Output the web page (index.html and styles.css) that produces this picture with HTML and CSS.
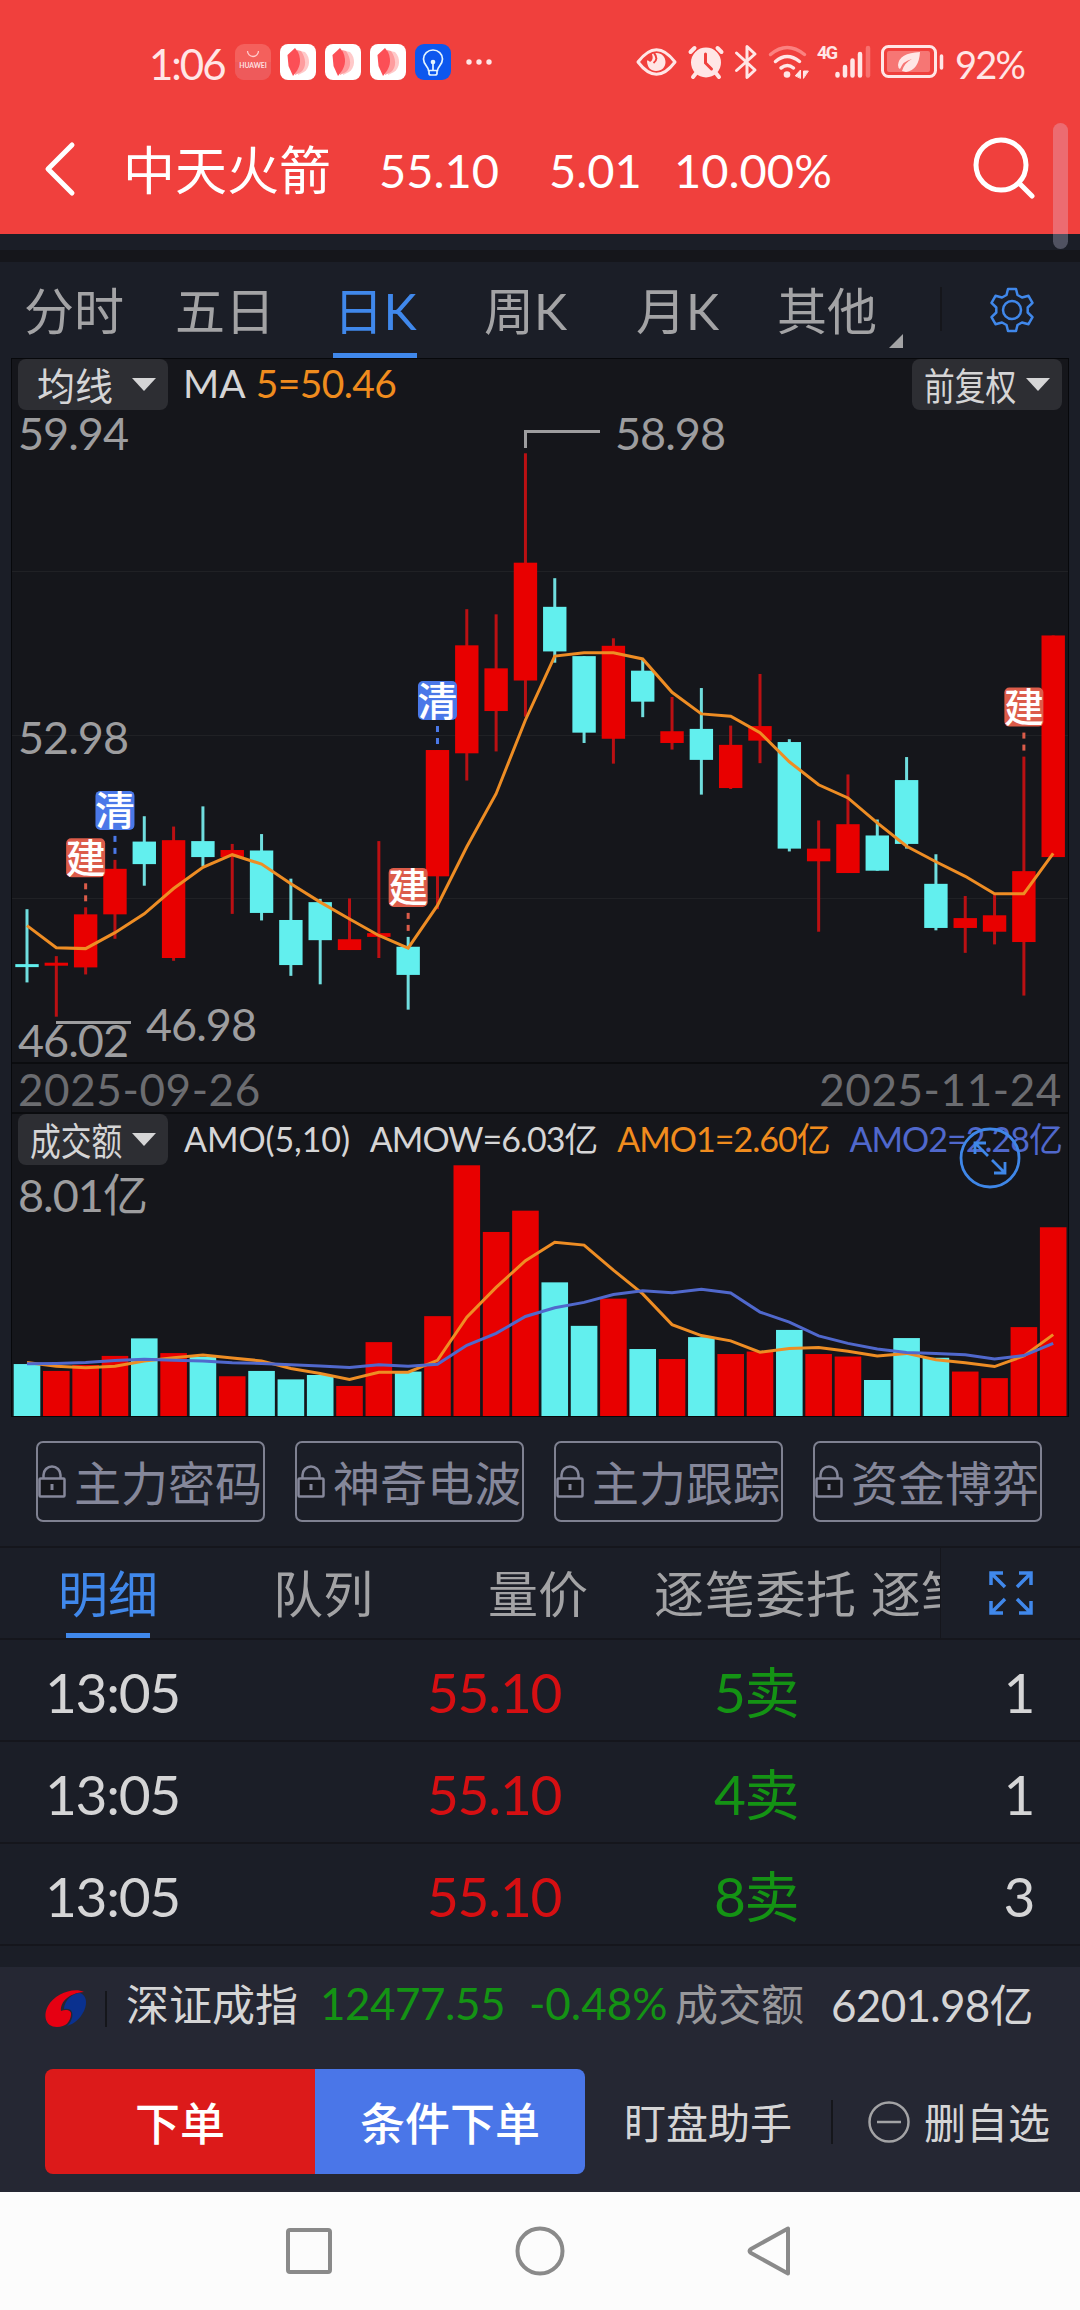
FILE: index.html
```html
<!DOCTYPE html>
<html lang="zh-CN">
<head>
    <meta charset="UTF-8">
    <meta name="viewport" content="width=device-width, initial-scale=1.0">
    <title>中天火箭</title>
    <link rel="stylesheet" href="styles.css">
</head>
<body>
    <header class="top">
        <div class="status">
            <span class="clock">1:06</span>
            <div class="apps">
                <svg class="app" viewBox="0 0 36 36">
                    <rect width="36" height="36" rx="9" fill="#f4605c"/>
                    <path d="M0 18h36v9a9 9 0 0 1-9 9H9a9 9 0 0 1-9-9z" fill="#e9565a" opacity=".6"/>
                    <path d="M12.500 7a5.500 5.500 0 0 0 11 0" fill="none" stroke="#fcc" stroke-width="1.300"/>
                    <text x="18" y="23.500" class="app-name">HUAWEI</text>
                </svg>
                <svg class="app" viewBox="0 0 36 36"><use href="#petal"/></svg>
                <svg class="app" viewBox="0 0 36 36"><use href="#petal"/></svg>
                <svg class="app" viewBox="0 0 36 36"><use href="#petal"/></svg>
                <svg class="app" viewBox="0 0 36 36">
                    <rect width="36" height="36" rx="9" fill="#0d57ee"/>
                    <g fill="none" stroke="#e4f4ff" stroke-width="1.700" stroke-linecap="round">
                        <path d="M13.500 26.500c0-4-5-5.500-5-11.500a9.500 9 0 0 1 19 0c0 6-5 7.500-5 11.500zM18 26v-7M14 27v2.500q0 1.500 2 1.500h4q2 0 2-1.500V27"/>
                        <circle cx="18" cy="18" r="1.500" fill="#e4f4ff"/>
                    </g>
                </svg>
            </div>
            <svg class="dots" viewBox="0 0 26 6"><circle cx="3" cy="3" r="2.700"/><circle cx="13" cy="3" r="2.700"/><circle cx="23" cy="3" r="2.700"/></svg>
            <div class="signals">
                <svg width="42" height="28" viewBox="0 0 42 28" fill="none" stroke="#ffe6e6" stroke-width="3">
                    <path d="M2 14Q20.500-10.500 39 14Q20.500 38.500 2 14z" stroke-linejoin="round"/>
                    <path d="M16 6q2 6-2 8q-1-2-3-1.500c0 7 4 10.500 9 10.500c6 0 9.500-4 9.500-9S26 5 20.500 5z" fill="#ffe6e6" stroke="none"/>
                    <path d="M18 5q5 6-.500 10" stroke="#f0403d" stroke-width="2"/>
                </svg>
                <svg width="36" height="34" viewBox="0 0 36 34" fill="#ffe6e6">
                    <circle cx="18" cy="17.500" r="15"/>
                    <path d="M2.500 7l4-4M33.500 7l-4-4M5 32l4-5M31 32l-4-5" stroke="#ffe6e6" stroke-width="4" stroke-linecap="round"/>
                    <path d="M17.500 9v9l6 6" stroke="#f0403d" stroke-width="3" fill="none" stroke-linecap="round"/>
                </svg>
                <svg width="24" height="36" viewBox="0 0 24 36" fill="none" stroke="#ffe6e6" stroke-width="3" stroke-linecap="round" stroke-linejoin="round">
                    <path d="M2.500 9l18.500 17-8 7.500v-31L21 10 2.500 26.500"/>
                </svg>
                <svg width="42" height="34" viewBox="0 0 42 34" fill="none" stroke="#ffe6e6" stroke-width="3.500" stroke-linecap="round">
                    <path d="M2.500 9.500q16.500-14 34 0" stroke="#fb8280"/>
                    <path d="M7.500 16.500q11.500-10 24 0"/>
                    <path d="M13 23q6.500-5 12.500 0"/>
                    <circle cx="19" cy="29.500" r="3.300" fill="#ffe6e6" stroke="none"/>
                    <path d="M32.500 33v-8l-5 5.500zM35.500 33v-7h4.500z" fill="#ffe6e6" stroke-width="1"/>
                </svg>
                <div class="cell">
                    <span class="net">4G</span>
                    <svg width="36" height="34" viewBox="0 0 36 34" stroke="#ffe6e6" stroke-width="4.500" stroke-linecap="round">
                        <path d="M2.500 29v1.500M10 22v8.500M17.500 15.500v15M25 9v21.500"/>
                        <path d="M33 3v27.500" stroke="#f8716f"/>
                    </svg>
                </div>
                <svg width="64" height="34" viewBox="0 0 64 34" fill="none">
                    <rect x="1.500" y="1.500" width="53" height="30" rx="6" stroke="#ffe6e6" stroke-width="3"/>
                    <rect x="6" y="6" width="43" height="21" rx="2" fill="#f67674"/>
                    <path d="M39 7q-21 1-22 13q0 3 2 4q3-8 12-10q-8 4-10 12l4 1q13-2 14-20z" fill="#ffe6e6"/>
                    <path d="M60.500 11v12" stroke="#ffe6e6" stroke-width="3.500" stroke-linecap="round"/>
                </svg>
                <span class="percent">92%</span>
            </div>
        </div>
        <div class="title">
            <svg class="back" viewBox="0 0 34 54"><path d="M28 3L4 27l24 24"/></svg>
            <h1>中天火箭</h1>
            <span class="t-price">55.10</span>
            <span class="t-change">5.01</span>
            <span class="t-rate">10.00%</span>
            <svg class="search" viewBox="0 0 62 62"><circle cx="28" cy="27" r="25"/><path d="M46 45l13 13"/></svg>
        </div>
    </header>
    <div class="scrollbar"></div>

    <nav class="periods">
        <a class="p1">分时</a>
        <a class="p2">五日</a>
        <a class="p3 active">日K</a>
        <a class="p4">周K</a>
        <a class="p5">月K</a>
        <a class="p6">其他</a>
        <svg class="corner" viewBox="0 0 14 14"><path d="M14 0v14H0z"/></svg>
        <i class="sep"></i>
        <svg class="gear" viewBox="0 0 50 50">
            <path d="M19.500 7.500L21 1.500h8l1.500 6 4.500 2.500 6.500-1.700 4 7-4.800 4.700v5l4.800 4.700-4 7-6.500-1.700-4.500 2.500-1.500 6h-8l-1.500-6-4.500-2.500-6.500 1.700-4-7L9.300 25v-5l-4.800-4.700 4-7L15 10z" transform="translate(0 2.500)"/>
            <circle cx="25" cy="25" r="9"/>
        </svg>
    </nav>

    <main class="charts">
        <section class="kline">
            <div class="bar">
                <button class="pick">均线<i></i></button>
                <span class="ma">MA</span>
                <span class="ma5">5=50.46</span>
                <button class="pick narrow right"><span>前复权</span><i></i></button>
            </div>
            <svg id="kline" width="1056" height="704"></svg>
        </section>
        <div class="dates"><span>2025-09-26</span><span>2025-11-24</span></div>
        <section class="volume">
            <div class="bar">
                <button class="pick narrow"><span>成交额</span><i></i></button>
                <div class="amo">
                    <span class="params">AMO(5,10)</span>
                    <span>AMOW=6.03亿</span>
                    <span class="orange">AMO1=2.60亿</span>
                    <span class="blue">AMO2=2.28亿</span>
                </div>
            </div>
            <svg id="volume" width="1056" height="303"></svg>
            <svg class="zoom" viewBox="0 0 62 62">
                <circle cx="31" cy="31" r="29"/>
                <path d="M29 29L16 16M27 16H16v11M33 33l13 13M35 46h11V35"/>
            </svg>
        </section>
    </main>

    <div class="locked">
        <button><svg viewBox="0 0 28 34"><use href="#lock"/></svg>主力密码</button>
        <button><svg viewBox="0 0 28 34"><use href="#lock"/></svg>神奇电波</button>
        <button><svg viewBox="0 0 28 34"><use href="#lock"/></svg>主力跟踪</button>
        <button><svg viewBox="0 0 28 34"><use href="#lock"/></svg>资金博弈</button>
    </div>

    <nav class="details">
        <div class="detail-tabs">
            <a class="d1 active">明细</a>
            <a class="d2">队列</a>
            <a class="d3">量价</a>
            <a class="d4">逐笔委托</a>
            <a class="d5">逐笔</a>
        </div>
        <svg class="expand" viewBox="0 0 44 44"><path d="M2 14V2h12M2 2l14 14M30 2h12v12M42 2L28 16M2 30v12h12M2 42l14-14M42 30v12H30M42 42L28 28"/></svg>
    </nav>

    <div class="trades">
        <div class="trade"><span>13:05</span><span class="red">55.10</span><span class="green">5卖</span><span>1</span></div>
        <div class="trade"><span>13:05</span><span class="red">55.10</span><span class="green">4卖</span><span>1</span></div>
        <div class="trade"><span>13:05</span><span class="red">55.10</span><span class="green">8卖</span><span>3</span></div>
    </div>

    <footer class="bottom">
        <div class="index">
            <svg class="logo" viewBox="0 0 42 40">
                <path d="M39 3C28-2 10 5 3 17c-5 9-3 21 9 21c9 0 13-5 14-12c1-5-5-6-10-4c-1-9 8-18 23-19z" fill="#e60012"/>
                <path d="M19 20c0-8 8-16 16-16c6 2 8 9 4 18c-4 8-10 13-17 15c6-5 8-16 1-17q-2-.600-4 0z" fill="#0a318f"/>
            </svg>
            <i class="sep"></i>
            <span class="i-name">深证成指</span>
            <span class="i-value green">12477.55</span>
            <span class="i-rate green">-0.48%</span>
            <span class="i-label">成交额</span>
            <span class="i-amount">6201.98亿</span>
        </div>
        <div class="actions">
            <button class="order">下单</button>
            <button class="cond">条件下单</button>
            <a class="watch">盯盘助手</a>
            <i class="sep"></i>
            <svg class="minus" viewBox="0 0 42 42"><circle cx="21" cy="21" r="19.500"/><path d="M9 21h24"/></svg>
            <a class="remove">删自选</a>
        </div>
    </footer>

    <div class="keys">
        <svg viewBox="0 0 52 52"><rect x="5" y="5" width="42" height="42" rx="2"/></svg>
        <svg viewBox="0 0 52 52"><circle cx="26" cy="26" r="22.500"/></svg>
        <svg viewBox="0 0 52 52"><path d="M43 3.500v45L6 28q-3-2 0-4z"/></svg>
    </div>

    <svg class="defs">
        <symbol id="petal" viewBox="0 0 36 36">
            <rect width="36" height="36" rx="8" fill="#fff"/>
            <path d="M20 7l5 1c6 6 5 16-1 20l-6 3z" fill="#ffc9c9"/>
            <path d="M17 6l4 1c5 7 6 16 0 21l-6 3z" fill="#fe9c9e"/>
            <path d="M7.500 11L15 4l3 4c4 9 2 16-5 24L8.500 22z" fill="#fc4f56"/>
        </symbol>
        <symbol id="lock" viewBox="0 0 28 34">
            <path d="M5.500 14v-4a8.500 8.500 0 0 1 17 0v4" fill="none" stroke="#85879a" stroke-width="2.500"/>
            <rect x="1.500" y="13.500" width="25" height="18" rx="1" fill="#15161b" stroke="#85879a" stroke-width="2.500"/>
            <path d="M14 19v6" stroke="#85879a" stroke-width="3"/>
        </symbol>
    </svg>

    <script>
        // [high, body top, body bottom, low, up, amount]
        const days = [
            [49.27, 48.10, 48.04, 47.71, 0, 1.66],
            [48.27, 48.13, 48.07, 46.98, 1, 1.44],
            [49.31, 49.16, 48.03, 47.88, 1, 1.63],
            [50.32, 50.13, 49.16, 48.64, 1, 1.92],
            [51.25, 50.71, 50.23, 49.77, 0, 2.48],
            [51.03, 50.74, 48.23, 48.17, 1, 2.01],
            [51.46, 50.72, 50.38, 50.18, 0, 1.89],
            [50.66, 50.53, 50.38, 49.17, 1, 1.27],
            [50.87, 50.52, 49.19, 49.03, 0, 1.44],
            [49.92, 49.04, 48.08, 47.85, 0, 1.17],
            [49.49, 49.42, 48.61, 47.67, 0, 1.31],
            [49.50, 48.63, 48.40, 48.40, 1, 0.96],
            [50.72, 48.76, 48.68, 48.23, 1, 2.36],
            [48.68, 48.47, 47.87, 47.13, 0, 1.42],
            [52.66, 52.66, 49.97, 49.27, 1, 3.19],
            [55.66, 54.89, 52.59, 52.01, 1, 8.01],
            [55.55, 54.40, 53.49, 52.63, 1, 5.88],
            [58.98, 56.65, 54.14, 53.37, 1, 6.56],
            [56.32, 55.71, 54.76, 54.52, 0, 4.27],
            [54.66, 54.66, 53.03, 52.81, 0, 2.88],
            [55.04, 54.88, 52.90, 52.37, 1, 3.75],
            [54.59, 54.35, 53.69, 53.36, 0, 2.14],
            [53.79, 53.06, 52.81, 52.67, 1, 1.82],
            [53.98, 53.11, 52.45, 51.71, 0, 2.52],
            [53.18, 52.77, 51.85, 51.83, 1, 1.98],
            [54.28, 53.17, 52.86, 52.38, 1, 2.06],
            [52.89, 52.83, 50.56, 50.50, 0, 2.75],
            [51.16, 50.56, 50.29, 48.79, 1, 1.98],
            [52.14, 51.08, 50.04, 50.04, 1, 1.90],
            [51.18, 50.84, 50.09, 50.09, 0, 1.15],
            [52.51, 52.02, 50.66, 50.56, 0, 2.49],
            [50.44, 49.81, 48.87, 48.82, 0, 1.86],
            [49.55, 49.08, 48.87, 48.34, 1, 1.42],
            [49.58, 49.14, 48.79, 48.52, 1, 1.21],
            [52.52, 50.08, 48.57, 47.43, 1, 2.84],
            [55.10, 55.10, 50.38, 50.38, 1, 6.03]
        ];
        const ma5 = [48.92, 48.45, 48.43, 48.77, 49.17, 49.71, 50.16, 50.43, 50.23, 49.81, 49.42, 49.06,
            48.71, 48.44, 49.35, 50.60, 51.73, 53.30, 54.66, 54.73, 54.73, 54.60, 53.89, 53.43,
            53.38, 53.03, 52.41, 51.92, 51.64, 51.11, 50.61, 50.28, 49.97, 49.60, 49.60, 50.46];
        const amo1 = [1.71, 1.59, 1.54, 1.59, 1.76, 1.86, 1.95, 1.85, 1.76, 1.52, 1.36, 1.17,
            1.40, 1.40, 1.78, 3.16, 4.11, 4.96, 5.55, 5.46, 4.66, 3.90, 2.92, 2.57,
            2.40, 2.04, 2.16, 2.19, 2.07, 1.92, 2.00, 1.80, 1.70, 1.58, 1.92, 2.60];
        const amo2 = [1.67, 1.68, 1.71, 1.77, 1.81, 1.78, 1.76, 1.70, 1.68, 1.64, 1.60, 1.55,
            1.64, 1.59, 1.65, 2.26, 2.64, 3.18, 3.46, 3.63, 3.88, 4.00, 3.94, 4.05,
            3.93, 3.32, 3.00, 2.56, 2.32, 2.14, 2.03, 2.00, 1.96, 1.82, 1.93, 2.32];
        const marks = [[2, '建'], [3, '清'], [13, '建'], [14, '清'], [34, '建']];

        const x = i => 15 + i * 29.32;
        const y = price => 376 - (price - 52.98) * 46.95;
        const v = amount => 302 - amount * 31.3;
        const line = (values, scale, cls) =>
            `<polyline class="${cls}" points="${values.map((n, i) => x(i) + ',' + scale(n)).join(' ')}"/>`;

        function drawKline() {
            let out = '';
            [212.5, 376.5, 539.5].forEach(g => out += `<path class="grid" d="M0 ${g}h1056"/>`);
            out += '<text class="scale" x="6" y="91">59.94</text>';
            out += '<text class="scale" x="6" y="395">52.98</text>';
            out += '<text class="scale" x="6" y="698">46.02</text>';
            days.forEach((d, i) => {
                const cls = d[4] ? 'up' : 'down';
                out += `<rect class="${cls} wick" x="${x(i) - 1.5}" y="${y(d[0])}" width="3" height="${y(d[3]) - y(d[0])}"/>`;
                out += `<rect class="${cls}" x="${x(i) - 11.7}" y="${y(d[1])}" width="23.4" height="${Math.max(3, y(d[2]) - y(d[1]))}"/>`;
            });
            out += line(ma5, y, 'line-orange');
            out += '<path class="callout" d="M513.5 89V72.500H588M44 663.500h75"/>';
            out += '<text class="scale" x="603" y="91">58.98</text>';
            out += '<text class="scale" x="134" y="682">46.98</text>';
            marks.forEach(([i, word]) => {
                const top = y(days[i][0]) - 69;
                const cls = word === '建' ? 'mark-buy' : 'mark-sell';
                out += `<g class="${cls}"><rect x="${x(i) - 19.5}" y="${top}" width="39" height="39" rx="5"/>`;
                out += `<rect x="${x(i) - 1.5}" y="${top + 45}" width="3" height="6"/>`;
                out += `<rect x="${x(i) - 1.5}" y="${top + 57}" width="3" height="6"/>`;
                out += `<text x="${x(i)}" y="${top + 34.5}">${word}</text></g>`;
            });
            document.getElementById('kline').innerHTML = out;
        }

        function drawVolume() {
            let out = '<text class="scale" x="6" y="98">8.01亿</text>';
            days.forEach((d, i) => {
                out += `<rect class="${d[4] ? 'up' : 'down'}" x="${x(i) - 13.3}" y="${v(d[5])}" width="26.6" height="${302 - v(d[5])}"/>`;
            });
            out += line(amo1, v, 'line-orange') + line(amo2, v, 'line-blue');
            document.getElementById('volume').innerHTML = out;
        }

        drawKline();
        drawVolume();
    </script>
</body>
</html>
```
FILE: styles.css
```css
* {
    box-sizing: border-box;
}

body {
    margin: 0;
    width: 1080px;
    height: 2310px;
    overflow: hidden;
    background-color: #1b1e27;
    color: #d5d5d6;
    font-family: Lato, "Noto Sans CJK SC", sans-serif;
    white-space: nowrap;
}

svg {
    display: block;
    flex-shrink: 0;
    overflow: visible;
}

button {
    border: none;
    padding: 0;
    font-family: inherit;
    color: inherit;
    white-space: nowrap;
}

.defs {
    display: none;
}

/* header */
.top {
    height: 234px;
    background-color: #f0403d;
    color: #fff;
}

.status {
    display: flex;
    align-items: center;
    height: 124px;
    padding-left: 149px;
    color: #ffe6e6;
}

.clock {
    width: 86px;
    font-size: 42px;
    line-height: 50px;
    margin-top: 3px;
    letter-spacing: -2px;
}

.apps {
    display: flex;
    gap: 9px;
}

.app {
    width: 36px;
    height: 36px;
}

.app-name {
    font-size: 6.8px;
    font-weight: bold;
    text-anchor: middle;
    fill: #ffe0e0;
}

.dots {
    width: 26px;
    height: 6px;
    margin-left: 15px;
    fill: #ffe6e6;
}

.signals {
    display: flex;
    align-items: center;
    gap: 10px;
    margin-left: 144px;
}

.cell {
    display: flex;
    align-items: flex-start;
    margin-left: -3px;
}

.net {
    width: 18px;
    font-family: Roboto, sans-serif;
    font-size: 18px;
    font-weight: bold;
    line-height: 16px;
    letter-spacing: -1.5px;
}

.percent {
    font-size: 38px;
    letter-spacing: -1.8px;
    margin-top: 3px;
}

.title {
    display: flex;
    align-items: center;
    height: 92px;
    padding-left: 44px;
}

.back {
    width: 34px;
    height: 54px;
    margin-top: -3px;
    fill: none;
    stroke: #fff;
    stroke-width: 5;
    stroke-linecap: round;
    stroke-linejoin: round;
}

h1 {
    width: 256px;
    margin: -1px 0 0 45px;
    font-size: 52px;
    font-weight: normal;
    line-height: 60px;
}

.t-price, .t-change, .t-rate {
    font-size: 47px;
    margin-top: -1px;
}

.t-price {
    width: 170px;
}

.t-change {
    width: 125px;
}

.t-rate {
    width: 299px;
}

.search {
    width: 62px;
    height: 62px;
    margin-top: -2px;
    fill: none;
    stroke: #fff;
    stroke-width: 5;
    stroke-linecap: round;
}

.scrollbar {
    position: absolute;
    left: 1053px;
    top: 123px;
    width: 15px;
    height: 126px;
    border-radius: 8px;
    background-color: rgba(225, 225, 255, 0.27);
}

/* period tabs */
.periods {
    display: flex;
    align-items: center;
    height: 124px;
    padding-left: 24px;
    border-top: 16px solid #1b1e27;
    background: linear-gradient(#15161b 12px, transparent 12px);
    color: #a3a3a5;
    font-size: 50px;
}

.periods a {
    height: 96px;
    margin-top: 12px;
    line-height: 98px;
}

.p1, .p2 {
    width: 151px;
}

.p3 {
    width: 84px;
    margin-left: 7px;
    text-align: center;
}

.p4 {
    width: 152px;
    margin-left: 67px;
}

.p5 {
    width: 141px;
}

.p6 {
    width: 112px;
}

.periods .active, .details .active {
    color: #4088eb;
    background: linear-gradient(#4088eb, #4088eb) bottom / 84px 5px no-repeat;
}

.corner {
    width: 14px;
    height: 14px;
    margin-top: 74px;
    fill: #a3a3a5;
}

.sep {
    width: 2px;
    height: 44px;
    background-color: #15161b;
}

.periods .sep {
    margin: 10px 0 0 37px;
}

.gear {
    width: 50px;
    height: 50px;
    margin: 12px 0 0 45px;
    fill: none;
    stroke: #4088eb;
    stroke-width: 2.5;
    stroke-linejoin: round;
}

/* charts */
.charts {
    width: 1058px;
    height: 1059px;
    margin-left: 11px;
    border: 1px solid #07080b;
    background-color: #15161b;
}

.kline, .volume {
    display: grid;
    position: relative;
}

.kline {
    height: 703px;
}

.kline > *, .volume > * {
    grid-area: 1 / 1;
}

.bar {
    display: flex;
    align-items: center;
    height: 51px;
    padding: 0 6px;
    z-index: 1;
}

.pick {
    display: flex;
    align-items: center;
    justify-content: space-between;
    width: 150px;
    height: 51px;
    padding: 0 12px 3px 19px;
    border-radius: 8px;
    background-color: #2d2e33;
    font-size: 38px;
}

.pick i {
    margin-top: 3px;
    border: 12px solid transparent;
    border-top: 13px solid #d5d5d6;
    border-bottom: none;
}

.pick.right {
    margin-left: auto;
}

.pick.narrow {
    padding-left: 12px;
}

/* three characters squeezed into the width of the button */
.pick.narrow span {
    width: 92px;
    transform: scaleX(0.81);
    transform-origin: left;
}

.ma, .ma5 {
    font-size: 39px;
    margin: -3px 0 0 15px;
}

.ma5 {
    margin-left: 10px;
    letter-spacing: -0.6px;
}

.ma5, .orange {
    color: #f08c1e;
}

.blue {
    color: #5068cc;
}

.dates {
    display: flex;
    justify-content: space-between;
    height: 52px;
    padding: 0 6px;
    border-top: 2px solid #0b0c0f;
    border-bottom: 2px solid #0b0c0f;
    color: #6b6c70;
    font-size: 44px;
    line-height: 50px;
    letter-spacing: 0.6px;
}

.amo {
    display: flex;
    flex: 1;
    align-items: baseline;
    justify-content: space-between;
    margin: -4px 0 0 16px;
    font-size: 34px;
    letter-spacing: -1px;
}

.params {
    letter-spacing: -0.1px;
}

.zoom {
    position: absolute;
    left: 947px;
    top: 13px;
    z-index: 2;
    width: 62px;
    height: 62px;
    fill: none;
    stroke: #3f87e8;
    stroke-width: 2.8;
}

.grid {
    stroke: #202125;
}

.scale {
    font-size: 45px;
    letter-spacing: -1px;
    fill: #9d9d9f;
}

.up {
    fill: #e80000;
}

.down {
    fill: #62efee;
}

.up.wick {
    fill: #bb1013;
}

.down.wick {
    fill: #70dedf;
}

.line-orange, .line-blue {
    fill: none;
    stroke: #ee8d24;
    stroke-width: 3;
}

.line-blue {
    stroke: #5068cc;
}

.callout {
    fill: none;
    stroke: #9d9d9f;
    stroke-width: 3;
}

.mark-buy {
    fill: #dc5c4a;
}

.mark-sell {
    fill: #4a78e8;
}

.mark-buy text, .mark-sell text {
    fill: #fff;
    font-size: 40px;
    font-weight: 500;
    text-anchor: middle;
}

/* locked indicators */
.locked {
    display: flex;
    gap: 30px;
    height: 129px;
    padding: 24px 36px 0;
}

.locked button {
    display: flex;
    align-items: center;
    width: 229px;
    height: 81px;
    padding-bottom: 2px;
    border: 2px solid #7f8191;
    border-radius: 7px;
    background: none;
    color: #85879a;
    font-size: 47px;
}

.locked svg {
    width: 28px;
    height: 34px;
    margin: 2px 8px 0 0;
}

/* details */
.details {
    display: flex;
    align-items: center;
    height: 94px;
    border-top: 2px solid #15161c;
    border-bottom: 2px solid #15161c;
}

.detail-tabs {
    display: flex;
    width: 941px;
    height: 90px;
    padding-left: 58px;
    overflow: hidden;
    border-right: 1px solid #15161c;
    color: #a3a3a5;
    font-size: 50px;
    line-height: 92px;
}

.detail-tabs a {
    flex-shrink: 0;
}

.d1 {
    width: 100px;
}

.d2 {
    margin-left: 115px;
}

.d3 {
    margin-left: 115px;
}

.d4 {
    margin-left: 66px;
    letter-spacing: 0.7px;
}

.d5 {
    margin-left: 14px;
}

.expand {
    width: 44px;
    height: 44px;
    margin-left: 48px;
    fill: none;
    stroke: #4088eb;
    stroke-width: 3.5;
}

.trade {
    display: grid;
    grid-template-columns: 382px 287px 200px 1fr;
    height: 102px;
    padding: 0 46px 0 45px;
    border-bottom: 2px solid #15161c;
    font-size: 55px;
    line-height: 105px;
    letter-spacing: -1.3px;
}

.trade span:last-child {
    text-align: right;
}

.red {
    color: #d60f12;
}

.green {
    color: #149314;
}

/* footer */
.bottom {
    height: 225px;
    margin-top: 21px;
    background-color: #252733;
}

.index {
    display: flex;
    align-items: center;
    height: 84px;
    padding-left: 45px;
    font-size: 43px;
}

.logo {
    width: 42px;
    height: 40px;
}

.index .sep {
    height: 36px;
    margin: 0 19px 0 18px;
}

.i-name {
    width: 194px;
    margin-top: -15px;
}

.i-value, .i-rate, .i-amount {
    font-size: 44px;
    margin-top: -12px;
}

.i-value {
    width: 209px;
    letter-spacing: -0.5px;
}

.i-rate {
    width: 146px;
}

.i-label {
    width: 156px;
    margin-top: -15px;
    color: #98989b;
}

.i-amount {
    letter-spacing: -0.7px;
}

.actions {
    display: flex;
    align-items: center;
    margin-top: 18px;
    padding-left: 45px;
    font-size: 42px;
}

.order, .cond {
    width: 270px;
    height: 105px;
    color: #fff;
    font-size: 45px;
    font-weight: 500;
}

.order {
    border-radius: 8px 0 0 8px;
    background-color: #dc1a1a;
}

.cond {
    border-radius: 0 8px 8px 0;
    background-color: #4a76e8;
}

.watch {
    margin: -2px 0 0 39px;
}

.actions .sep {
    margin: 0 35px 0 39px;
}

.minus {
    width: 42px;
    height: 42px;
    fill: none;
    stroke: #a3a3a5;
    stroke-width: 2.5;
}

.remove {
    margin: -2px 0 0 14px;
}

/* system navigation */
.keys {
    display: flex;
    justify-content: center;
    align-items: center;
    gap: 179px;
    height: 118px;
    background-color: #fcfcfc;
}

.keys svg {
    width: 52px;
    height: 52px;
    fill: none;
    stroke: #8a8a8a;
    stroke-width: 4;
    stroke-linejoin: round;
}
```
